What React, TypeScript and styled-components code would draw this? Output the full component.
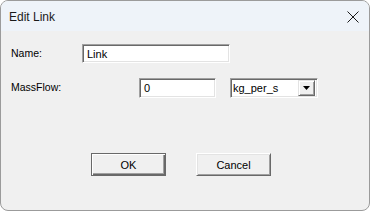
import React from "react";
import styled, { createGlobalStyle } from "styled-components";

const Global = createGlobalStyle`
  html, body { margin: 0; padding: 0; background: #ffffff; }
  #root { width: 370px; height: 211px; }
  * { box-sizing: border-box; }
`;

const Window = styled.div`
  width: 370px;
  height: 211px;
  border: 1px solid #9b9b9b;
  border-radius: 8px;
  overflow: hidden;
  background: #f0f0f0;
  display: flex;
  flex-direction: column;
  font-family: "Liberation Sans", Arial, sans-serif;
  font-size: 11px;
  color: #000;
`;

const TitleBar = styled.div`
  height: 30px;
  flex: none;
  background: #eef3f9;
  display: flex;
  align-items: center;
  justify-content: space-between;
  padding: 0 8px 0 8px;
`;

const Title = styled.span`
  font-family: "Liberation Sans", Arial, sans-serif;
  font-size: 12px;
  color: #1a1a1a;
  margin-top: 1px;
`;

const CloseButton = styled.div`
  width: 14px;
  height: 14px;
  display: flex;
  align-items: center;
  justify-content: center;
  margin-right: 1px;
  margin-top: 1px;
`;

const Body = styled.div`
  display: flex;
  flex-direction: column;
  padding: 13px 0 0 9px;
`;

const Row = styled.div<{ $cols: string; $top?: number }>`
  display: grid;
  grid-template-columns: ${(p) => p.$cols};
  align-items: center;
  margin-top: ${(p) => p.$top ?? 0}px;
`;

const Label = styled.span`
  font-size: 10.5px;
  line-height: 13px;
  padding-left: 1px;
`;

const Field = styled.div<{ $w: number; $h: number }>`
  width: ${(p) => p.$w}px;
  height: ${(p) => p.$h}px;
  background: #fff;
  border-top: 1px solid #a0a0a0;
  border-left: 1px solid #a0a0a0;
  border-right: 1px solid #ffffff;
  border-bottom: 1px solid #ffffff;
  box-shadow: inset 1px 1px 0 #696969, inset -1px -1px 0 #e3e3e3;
  display: flex;
  align-items: center;
  padding-left: 4px;
  font-size: 11px;
`;

const Combo = styled(Field)`
  margin-top: 1px;
  padding-left: 2px;
  padding-right: 2px;
  justify-content: space-between;
`;

const DropButton = styled.div`
  width: 17px;
  height: 16px;
  background: #f0f0f0;
  border-top: 1px solid #e3e3e3;
  border-left: 1px solid #e3e3e3;
  border-right: 1px solid #696969;
  border-bottom: 1px solid #696969;
  box-shadow: inset 1px 1px 0 #ffffff, inset -1px -1px 0 #a0a0a0;
  display: flex;
  align-items: center;
  justify-content: center;
`;

const ButtonRow = styled.div`
  display: flex;
  gap: 30px;
  padding-left: 81px;
  margin-top: 55px;
`;

const Button = styled.div<{ $default?: boolean }>`
  width: 75px;
  height: 23px;
  background: #f0f0f0;
  border-top: 1px solid ${(p) => (p.$default ? "#696969" : "#ffffff")};
  border-left: 1px solid ${(p) => (p.$default ? "#696969" : "#ffffff")};
  border-right: 1px solid #696969;
  border-bottom: 1px solid #696969;
  box-shadow: ${(p) =>
    p.$default
      ? "inset 1px 1px 0 #ffffff, inset -1px -1px 0 #696969, inset -2px -2px 0 #a0a0a0"
      : "inset 1px 1px 0 #e3e3e3, inset -1px -1px 0 #a0a0a0"};
  display: flex;
  align-items: center;
  justify-content: center;
  font-size: 11px;
`;

export default function App() {
  return (
    <>
      <Global />
      <Window>
        <TitleBar>
          <Title>Edit Link</Title>
          <CloseButton>
            <svg width="12" height="12" viewBox="0 0 12 12">
              <path d="M0.5 0.5 L11.5 11.5 M11.5 0.5 L0.5 11.5" stroke="#1a1a1a" strokeWidth="1" fill="none" />
            </svg>
          </CloseButton>
        </TitleBar>
        <Body>
          <Row $cols="72px 148px">
            <Label>Name:</Label>
            <Field $w={148} $h={19}>Link</Field>
          </Row>
          <Row $cols="129px 77px 14px 88px" $top={14}>
            <Label>MassFlow:</Label>
            <Field $w={77} $h={20}>0</Field>
            <span />
            <Combo $w={88} $h={20}>
              <span>kg_per_s</span>
              <DropButton>
                <svg width="7" height="4" viewBox="0 0 7 4">
                  <path d="M0 0 H7 L3.5 4 Z" fill="#000" />
                </svg>
              </DropButton>
            </Combo>
          </Row>
          <ButtonRow>
            <Button $default>OK</Button>
            <Button>Cancel</Button>
          </ButtonRow>
        </Body>
      </Window>
    </>
  );
}
